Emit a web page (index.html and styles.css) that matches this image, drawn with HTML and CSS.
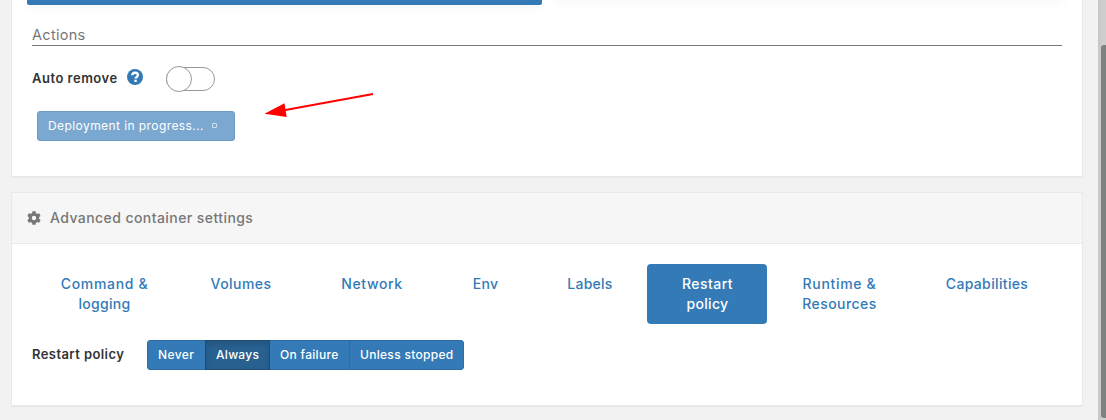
FILE: index.html
```html
<!DOCTYPE html>
<html lang="en">
<head>
<meta charset="utf-8">
<title>Create container</title>
<link rel="stylesheet" href="styles.css">
</head>
<body>
<main class="page">
  <section class="widget widget-top">
    <div class="selectors"><div class="selector selector-active"></div><div class="selector"></div></div>
    <div class="section-title"><span class="t-actions">Actions</span></div>
    <div class="toggle-row">
      <label class="control-label t-auto">Auto remove</label>
      <svg class="help" viewBox="0 0 16 16"><circle cx="8" cy="8" r="8"/><path d="M5.3 6.3C5.3 4.5 6.5 3.7 8.1 3.7s2.8 1 2.8 2.4c0 2-2.3 2-2.3 3.3" class="help-mark"/><rect x="7.4" y="10.7" width="2.3" height="2.3" class="help-dot"/></svg>
      <span class="switch"><span class="knob"></span></span>
    </div>
    <button class="deploy" disabled><span class="t-deploy">Deployment in progress...</span><span class="spinner"></span></button>
    <svg class="arrow" viewBox="0 0 112 28"><path d="M20 19.3L109 2.9" stroke="#f00" stroke-width="2"/><path d="M0.5 22.8L20.5 12.3 22.7 25.9z" fill="#f00"/></svg>
  </section>
  <section class="widget widget-settings">
    <header class="widget-header">
      <svg class="cog" viewBox="0 0 512 512"><path fill-rule="evenodd" d="M487 316l-43-25c4-23 4-47 0-70l43-25c5-3 7-9 6-14-11-36-30-69-55-96-4-4-10-5-15-2l-43 24c-18-15-39-27-61-35V24c0-6-4-11-9-12-37-8-75-8-110 0-5 1-9 6-9 12v49c-22 8-43 20-61 35L87 84c-5-3-11-2-15 2-25 27-44 60-55 96-1 5 1 11 6 14l43 25c-4 23-4 47 0 70l-43 25c-5 3-7 9-6 14 11 36 30 69 55 96 4 4 10 5 15 2l43-24c18 15 39 27 61 35v49c0 6 4 11 9 12 37 8 75 8 110 0 5-1 9-6 9-12v-49c22-8 43-20 61-35l43 24c5 3 11 2 15-2 25-27 44-60 55-96 1-5-1-11-6-14zM256 336a80 80 0 1 1 0-160 80 80 0 0 1 0 160z"/></svg>
      <span class="t-header">Advanced container settings</span>
    </header>
    <nav class="pills">
      <a class="pill"><span class="t-command">Command &amp;</span><span class="t-logging">logging</span></a>
      <a class="pill"><span class="t-volumes">Volumes</span></a>
      <a class="pill"><span class="t-network">Network</span></a>
      <a class="pill"><span class="t-env">Env</span></a>
      <a class="pill"><span class="t-labels">Labels</span></a>
      <a class="pill pill-active"><span class="t-restart">Restart</span><span class="t-policy">policy</span></a>
      <a class="pill"><span class="t-runtime">Runtime &amp;</span><span class="t-resources">Resources</span></a>
      <a class="pill"><span class="t-capabilities">Capabilities</span></a>
    </nav>
    <div class="policy-row">
      <label class="control-label t-restartpolicy">Restart policy</label>
      <div class="btn-group">
        <button class="btn"><span class="t-never">Never</span></button>
        <button class="btn btn-active"><span class="t-always">Always</span></button>
        <button class="btn"><span class="t-failure">On failure</span></button>
        <button class="btn"><span class="t-unless">Unless stopped</span></button>
      </div>
    </div>
  </section>
</main>
<aside class="scrollbar"><div class="thumb"></div></aside>
</body>
</html>
```
FILE: styles.css
```css
* { box-sizing: border-box; }
body {
  margin: 0;
  height: 420px;
  display: flex;
  overflow: hidden;
  background: #f2f2f2;
  font-family: "Inter", "Liberation Sans", sans-serif;
  font-size: 14px;
  line-height: 20px;
  color: #333;
}
span, label { white-space: nowrap; }
.page { width: 1098px; padding: 0 15px 0 11px; }
.widget {
  position: relative;
  width: 1072px;
  background: #fff;
  border: 1px solid #e9e9e9;
  border-bottom-width: 2px;
}
.widget-top { height: 178px; border-top: 0; }
.selectors { display: flex; gap: 13px; height: 5px; padding-left: 15px; }
.selector { width: 515px; height: 5px; border-radius: 0 0 2px 2px; clip-path: inset(0 -15px -20px -15px); }
.selector + .selector { height: 0; width: 508px; box-shadow: 0 0 10px 1px rgba(0,0,0,.12); }
.selector-active { background: #337ab7; box-shadow: 0 3px 10px -2px rgba(0,0,0,.25); }
.section-title { margin: 20px 20px 0; height: 21px; border-bottom: 1px solid #777; color: #777; font-size: 14.5px; }
.toggle-row { display: flex; align-items: center; height: 30px; margin: 18px 0 0 20px; }
.control-label { font-size: 13px; font-weight: 600; margin-top: -2px; }
.t-auto { width: 86px; }
.help { width: 16px; height: 16px; margin: -4px 0 0 8.5px; fill: #337ab7; }
.help-mark { fill: none; stroke: #fff; stroke-width: 2.4; }
.help-dot { fill: #fff; }
.switch { width: 49px; height: 24px; margin-left: 23.5px; border: 1px solid #999; border-radius: 12px; display: flex; align-items: center; }
.knob { width: 26px; height: 26px; margin-left: -1px; border: 1px solid #999; border-radius: 50%; background: #fff; flex: none; }
.deploy {
  display: flex; align-items: center; width: 198px; height: 30px; margin: 17px 0 0 25px; padding: 0 10px;
  border: 1px solid #6c9bc7; border-radius: 3px; background: #7aa8d0; color: #fff; font: 12px/18px "Inter", sans-serif;
}
.t-deploy { width: 155px; }
.spinner { width: 5px; height: 5px; margin: -2px 0 0 9px; border: 1px solid #cfe0ef; border-radius: 1px; }
.arrow { position: absolute; left: 252px; top: 91px; width: 112px; height: 28px; }
.widget-settings { height: 215px; margin-top: 14px; }
.widget-header { display: flex; align-items: center; height: 51px; padding-left: 15px; background: #f6f6f6; border-bottom: 1px solid #e9e9e9; color: #777; font-weight: 500; }
.cog { width: 14px; height: 14px; margin-right: 9px; fill: #777; }
.pills { display: grid; grid-template-columns: 144px 129px 133px 94px 115px 120px 144px 151px; height: 60px; margin: 20px 20px 0; }
.pill { display: flex; flex-direction: column; align-items: center; padding: 10px 0 0 1px; color: #337ab7; font-weight: 500; border-radius: 4px; }
.pill-active { background: #337ab7; color: #fff; }
.policy-row { display: flex; align-items: center; margin: 16px 0 0 20px; }
.policy-row .control-label { width: 115px; }
.btn-group { display: flex; }
.btn { height: 30px; padding: 0 0 0 10px; text-align: left; border: 1px solid #2e6da4; background: #337ab7; color: #fff; font: 500 12px/18px "Inter", sans-serif; }
.btn + .btn { margin-left: -1px; }
.btn:nth-child(1) { width: 59px; border-radius: 3px 0 0 3px; }
.btn:nth-child(2) { width: 65px; z-index: 1; }
.btn:nth-child(3) { width: 81px; }
.btn:nth-child(4) { width: 115px; border-radius: 0 3px 3px 0; }
.btn-active { position: relative; background: #286090; border-color: #204d74; box-shadow: inset 0 3px 5px rgba(0,0,0,.125); }
.scrollbar { width: 8px; height: 420px; padding: 45px 0 0 3px; background: linear-gradient(90deg, #c9c9c5 3px, #cececf 3px); }
.thumb { width: 5px; height: 373px; background: #7c8280; border-radius: 3px 0 0 3px; }

/* Tracking */
.t-actions { letter-spacing: .3px; }
.t-auto { letter-spacing: .5px; }
.t-header { letter-spacing: .43px; }
.t-deploy, .t-restartpolicy { letter-spacing: .42px; }
.t-always, .t-failure, .t-unless { letter-spacing: .3px; }
.t-never { letter-spacing: .4px; }
.t-command, .t-runtime { letter-spacing: .68px; }
.t-logging, .t-env, .t-policy { letter-spacing: .3px; }
.t-volumes, .t-resources, .t-restart { letter-spacing: .45px; }
.t-network { letter-spacing: .6px; }
.t-labels { letter-spacing: .25px; }
.t-capabilities { letter-spacing: .35px; }
```
